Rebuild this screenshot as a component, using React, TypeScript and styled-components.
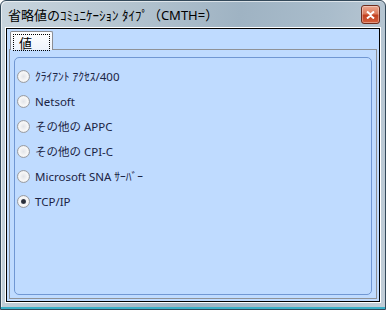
import styled, { createGlobalStyle, css } from "styled-components";

const Global = createGlobalStyle`
  html, body {
    margin: 0;
    padding: 0;
    width: 386px;
    height: 310px;
    overflow: hidden;
    background: #ffffff;
  }
`;

const options = [
  "ｸﾗｲｱﾝﾄ ｱｸｾｽ/400",
  "Netsoft",
  "その他の APPC",
  "その他の CPI-C",
  "Microsoft SNA ｻｰﾊﾞｰ",
  "TCP/IP",
];

export default function App() {
  const selected = 5;

  return (
    <>
      <Global />
      <Window>
        <TitleBar>
          <Title>省略値のｺﾐｭﾆｹｰｼｮﾝ ﾀｲﾌﾟ（CMTH=）</Title>
          <CloseButton>
            <svg width="9" height="8" viewBox="0 0 9 8">
              <path
                d="M1 0.5 L4.5 3.5 L8 0.5 M1 7.5 L4.5 4.5 L8 7.5"
                stroke="#ffffff"
                strokeWidth="2"
                fill="none"
              />
            </svg>
          </CloseButton>
        </TitleBar>
        <ClientEdge>
          <Client>
            <TabStrip>
              <Tab>
                <Focus>値</Focus>
              </Tab>
            </TabStrip>
            <TabPage>
              <GroupBox>
                {options.map((label, i) => (
                  <Row key={label}>
                    <Radio checked={i === selected} />
                    <Label>{label}</Label>
                  </Row>
                ))}
              </GroupBox>
            </TabPage>
          </Client>
        </ClientEdge>
        <Glow />
      </Window>
    </>
  );
}

const Window = styled.div`
  box-sizing: border-box;
  width: 386px;
  height: 310px;
  border: 1px solid #34495a;
  border-radius: 6px 6px 0 0;
  display: flex;
  flex-direction: column;
  background: linear-gradient(
    100deg,
    #c9d5de 0%,
    #b3c3cf 30%,
    #9fb3c3 55%,
    #a9bccb 75%,
    #c2ced8 100%
  );
  box-shadow: inset 1px 1px 0 rgba(255, 255, 255, 0.6);
`;

const TitleBar = styled.div`
  height: 26px;
  display: flex;
  align-items: flex-start;
  justify-content: space-between;
  padding: 0 5px 0 7px;
`;

const Title = styled.div`
  margin-top: 6px;
  font-family: "Noto Sans", "Noto Sans CJK JP", sans-serif;
  font-size: 13px;
  line-height: 16px;
  color: #000000;
  white-space: nowrap;
`;

const CloseButton = styled.div`
  box-sizing: border-box;
  margin-top: 4px;
  width: 19px;
  height: 19px;
  border: 1px solid #6e2b1c;
  border-radius: 3px;
  display: flex;
  align-items: center;
  justify-content: center;
  background: linear-gradient(
    180deg,
    #eba68f 0%,
    #dc7b5c 45%,
    #c3401f 55%,
    #d4603d 100%
  );
  box-shadow: inset 0 0 0 1px rgba(255, 255, 255, 0.35);
`;

const ClientEdge = styled.div`
  flex: 1;
  margin: 0 4px 0 4px;
  border: 1px solid #ffffff;
  display: flex;
`;

const Client = styled.div`
  flex: 1;
  border: 1px solid #000000;
  background: #bfdbff;
  display: flex;
  flex-direction: column;
  padding: 0 1px 1px 1px;
`;

const TabStrip = styled.div`
  height: 20px;
  display: flex;
  align-items: flex-end;
  padding-left: 2px;
`;

const Tab = styled.div`
  box-sizing: border-box;
  width: 43px;
  height: 19px;
  margin-bottom: -1px;
  border: 1px solid #8c8e94;
  border-bottom: none;
  border-radius: 2px 2px 0 0;
  background: linear-gradient(180deg, #ffffff 0%, #eef3fb 100%);
  padding: 2px 2px 0 2px;
  position: relative;
  z-index: 1;
`;

const Focus = styled.div`
  height: 15px;
  border: 1px dotted #000000;
  font-family: "Noto Sans CJK JP", sans-serif;
  font-size: 13px;
  line-height: 15px;
  padding-left: 5px;
  color: #000000;
`;

const TabPage = styled.div`
  flex: 1;
  margin: 0 1px 1px 1px;
  border: 1px solid #8f9297;
  padding: 7px 4px 3px 4px;
  display: flex;
`;

const GroupBox = styled.div`
  flex: 1;
  border: 1px solid #7097d3;
  border-radius: 5px;
  padding: 6px 2px 0 2px;
  display: flex;
  flex-direction: column;
`;

const Row = styled.div`
  height: 25px;
  display: flex;
  align-items: center;
  gap: 5px;
`;

const Radio = styled.span<{ checked: boolean }>`
  box-sizing: border-box;
  width: 13px;
  height: 13px;
  border-radius: 50%;
  border: 1px solid #9a9da2;
  background: radial-gradient(
    circle at 50% 50%,
    #e2e4e8 0%,
    #f7f7f7 55%,
    #d6d8dc 100%
  );
  position: relative;

  ${(p) =>
    p.checked &&
    css`
      &::after {
        content: "";
        position: absolute;
        left: 3px;
        top: 3px;
        width: 5px;
        height: 5px;
        border-radius: 50%;
        background: radial-gradient(circle, #2a2f3a 40%, #5a6474 100%);
      }
    `}
`;

const Label = styled.span`
  font-family: "Noto Sans", "Noto Sans CJK JP", sans-serif;
  font-size: 11.5px;
  line-height: 14px;
  color: #1b2444;
  white-space: nowrap;
`;

const Glow = styled.div`
  height: 4px;
  border-bottom: 2px solid #3bb0c8;
`;
